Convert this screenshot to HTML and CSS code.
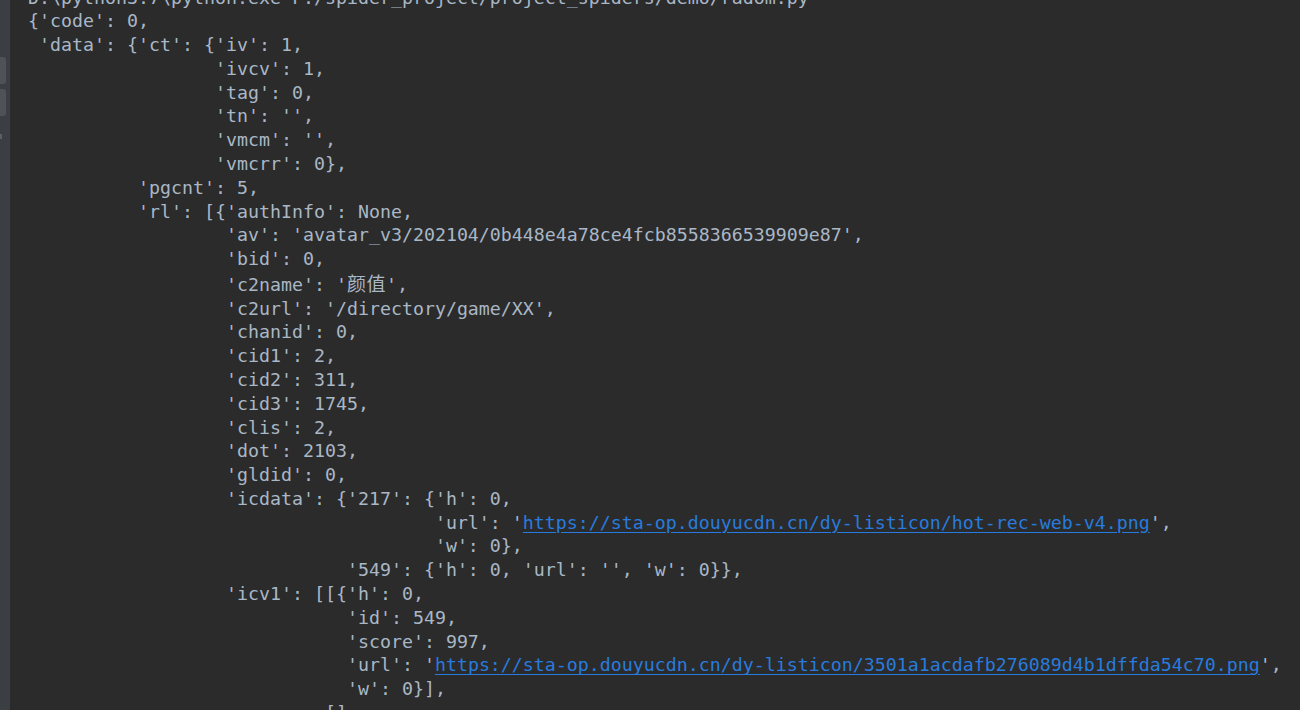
FILE: index.html
```html
<!DOCTYPE html>
<html>
<head>
<meta charset="utf-8">
<link rel="stylesheet" href="styles.css">
</head>
<body>
<div class="window">
  <aside class="gutter">
    <div class="gbtn"></div>
    <div class="gbtn"></div>
    <div class="gmark"></div>
  </aside>
  <main class="console">
<pre class="out">D:\python3.7\python.exe F:/spider_project/project_spiders/demo/radom.py
{'code': 0,
 'data': {'ct': {'iv': 1,
                 'ivcv': 1,
                 'tag': 0,
                 'tn': '',
                 'vmcm': '',
                 'vmcrr': 0},
          'pgcnt': 5,
          'rl': [{'authInfo': None,
                  'av': 'avatar_v3/202104/0b448e4a78ce4fcb8558366539909e87',
                  'bid': 0,
                  'c2name': '<span class="cjk">颜值</span>',
                  'c2url': '/directory/game/XX',
                  'chanid': 0,
                  'cid1': 2,
                  'cid2': 311,
                  'cid3': 1745,
                  'clis': 2,
                  'dot': 2103,
                  'gldid': 0,
                  'icdata': {'217': {'h': 0,
                                     'url': '<span class="link">https://sta-op.douyucdn.cn/dy-listicon/hot-rec-web-v4.png</span>',
                                     'w': 0},
                             '549': {'h': 0, 'url': '', 'w': 0}},
                  'icv1': [[{'h': 0,
                             'id': 549,
                             'score': 997,
                             'url': '<span class="link">https://sta-op.douyucdn.cn/dy-listicon/3501a1acdafb276089d4b1dffda54c70.png</span>',
                             'w': 0}],
                           [],
</pre>
  </main>
</div>
</body>
</html>
```
FILE: styles.css
```css
html, body {
  margin: 0;
  padding: 0;
  background: #2b2b2b;
}
.window {
  display: flex;
  width: 1300px;
  height: 710px;
  overflow: hidden;
}
.gutter {
  width: 10px;
  flex: none;
  background: #3b3e42;
  display: flex;
  flex-direction: column;
  padding-top: 57px;
  gap: 5px;
  box-sizing: border-box;
}
.gbtn {
  width: 6px;
  height: 27px;
  background: #4f5357;
  border-radius: 0 3px 3px 0;
}
.gmark {
  width: 2px;
  height: 5px;
  margin-top: 13px;
  background: #5c6064;
}
.console {
  flex: 1;
  overflow: hidden;
  padding-left: 18px;
}
.out {
  margin: -14.5px 0 0 0;
  font-family: "DejaVu Sans Mono", "Noto Sans CJK SC", monospace;
  font-size: 18.27px;
  line-height: 23.78px;
  color: #a9b7c6;
  white-space: pre;
}
.cjk {
  font-family: "Noto Sans CJK SC", sans-serif;
  font-size: 19px;
  letter-spacing: 0.5px;
}
.link {
  color: #287bde;
  text-decoration: underline;
  text-underline-offset: 3px;
}
```
